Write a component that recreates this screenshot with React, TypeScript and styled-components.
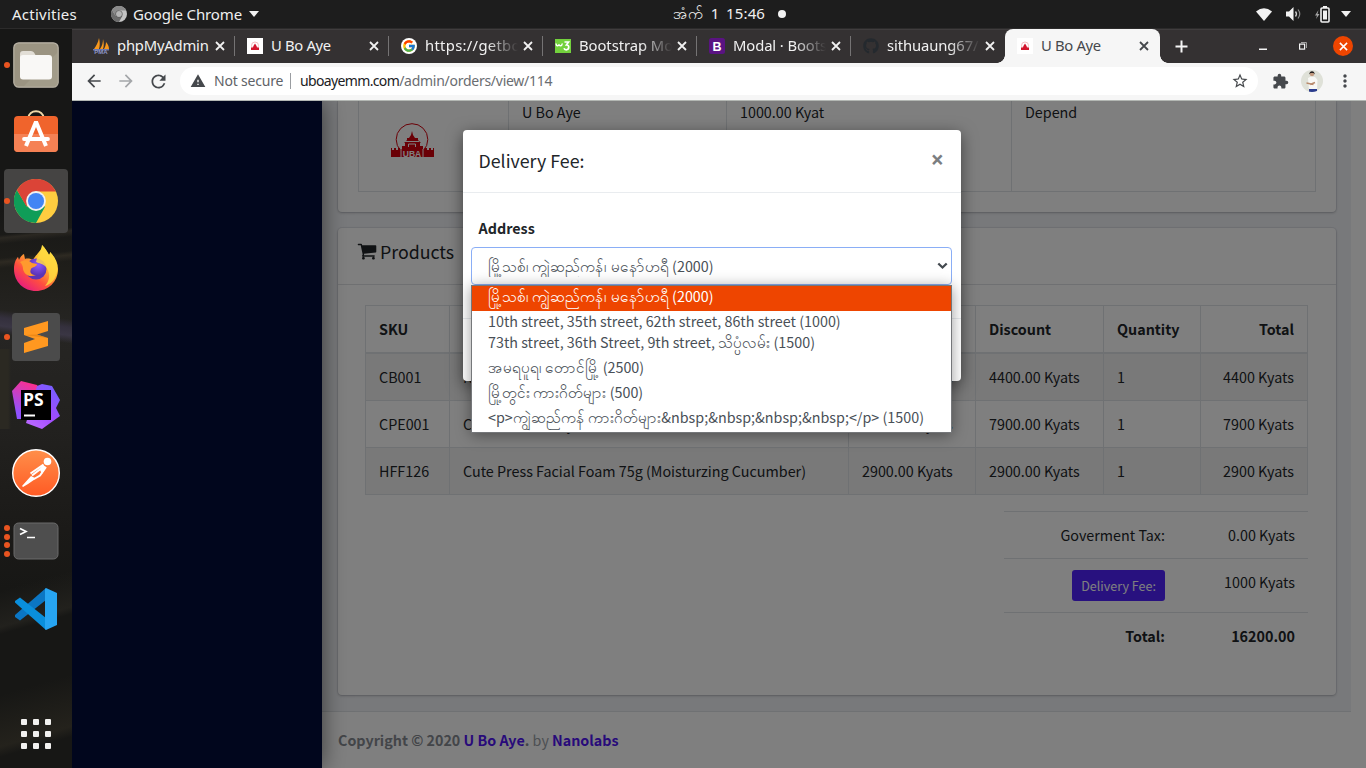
import React from "react";
import styled, { createGlobalStyle, css } from "styled-components";
import {
  MdArrowBack,
  MdArrowForward,
  MdExtension,
  MdMoreVert,
  MdRefresh,
  MdStarBorder,
  MdWarning,
} from "react-icons/md";
import { FaGithub } from "react-icons/fa";
import { FcGoogle } from "react-icons/fc";

const bodyFont = `"Noto Sans CJK JP", "Noto Sans", sans-serif`;
const shellFont = `"Noto Sans", "Open Sans", sans-serif`;

const GlobalStyle = createGlobalStyle`
  * { box-sizing: border-box; }
  body { margin: 0; overflow: hidden; background: #1d1d1d; }
  svg { display: block; flex: none; }
`;

const Desktop = styled.div`
  width: 1366px;
  height: 768px;
  display: flex;
  flex-direction: column;
  overflow: hidden;
  font-family: ${shellFont};
`;

/* ---------- system bar ---------- */

const SystemBar = styled.header`
  height: 29px;
  flex: none;
  display: flex;
  background: #1d1d1d;
  color: #f0f0f0;
  font-size: 15px;
  line-height: 28px;
  border-bottom: 1px solid #2c2b2b;
`;

const SystemLeft = styled.div`
  width: 673px;
  display: flex;
  align-items: center;
  padding-left: 12px;
`;

const ActivitiesLabel = styled.span`
  width: 99px;
  letter-spacing: 0.25px;
`;

const AppMenu = styled.span`
  display: flex;
  align-items: center;
  letter-spacing: -0.13px;
  span { margin: 0 7px 0 6px; }
`;

const Clock = styled.div`
  display: flex;
  align-items: center;
  height: 26px;
  line-height: 26px;
  white-space: pre;
`;

const ClockDay = styled.span`
  width: 53px;
`;

const ClockTime = styled.span`
  letter-spacing: 0.15px;
`;

const NoticeDot = styled.i`
  width: 8px;
  height: 8px;
  margin: 2px 0 0 13px;
  border-radius: 50%;
  background: #f2f2f2;
`;

const SystemRight = styled.div`
  display: flex;
  align-items: center;
  justify-content: flex-end;
  margin-left: auto;
  padding-right: 15px;
`;

/* ---------- dock ---------- */

const Workspace = styled.div`
  flex: 1;
  display: flex;
  min-height: 0;
`;

const Dock = styled.nav`
  width: 72px;
  flex: none;
  display: flex;
  flex-direction: column;
  padding-top: 2px;
  background:
    linear-gradient(174deg, transparent 205px, #2b2822 208px, transparent 214px, transparent 228px, #2e2a22 232px, transparent 238px),
    linear-gradient(8deg, transparent 0 255px, transparent 430px, #3a3644 438px, #34303d 446px, transparent 454px),
    linear-gradient(164deg, transparent 540px, #22211d 575px, transparent 582px, transparent 640px, #24221c 690px, transparent 700px),
    linear-gradient(90deg, #2b2922 0 8px, transparent 11px) 0 320px / 72px 80px no-repeat,
    linear-gradient(#171716 0 180px, #1f1e1a 240px, #262523 300px, #22211f 400px, #1b1a18 500px, #171715 560px);
`;

const DockSlot = styled.div`
  height: 68px;
  flex: none;
  display: flex;
  align-items: center;
  position: relative;
  padding-left: 4px;
`;

const DockTile = styled.div<{ $active?: boolean }>`
  width: 64px;
  height: 64px;
  display: flex;
  align-items: center;
  justify-content: center;
  border-radius: 4px;
  background: ${(p) => (p.$active ? "#454443" : "transparent")};
`;

const RunningDots = styled.div`
  position: absolute;
  left: 4px;
  top: 0;
  height: 68px;
  display: flex;
  flex-direction: column;
  justify-content: center;
  gap: 2.7px;
`;

const RunningDot = styled.i`
  width: 6px;
  height: 6px;
  border-radius: 50%;
  background: #e95420;
`;

const AppsGrid = styled.div`
  margin: auto 0 19px 21px;
  display: grid;
  grid-template-columns: repeat(3, 6px);
  gap: 6px;
`;

const AppsDot = styled.i`
  height: 6px;
  border-radius: 1px;
  background: #f2f1ef;
`;

/* ---------- browser chrome ---------- */

const Browser = styled.section`
  flex: 1;
  min-width: 0;
  display: flex;
  flex-direction: column;
`;

const TabStrip = styled.div`
  height: 34px;
  flex: none;
  display: flex;
  background: #343132;
  border-top: 1px solid #403d3e;
  padding-left: 9px;
`;

const TabBox = styled.div<{ $active?: boolean; $separated?: boolean }>`
  width: 154px;
  height: 34px;
  margin-top: -1px;
  flex: none;
  display: flex;
  align-items: center;
  position: relative;
  padding-left: 12px;
  color: #f1f1f1;
  ${(p) =>
    p.$separated &&
    css`
      &::after {
        content: "";
        width: 1px;
        height: 20px;
        margin-left: auto;
        background: #757374;
      }
    `}
  ${(p) =>
    p.$active &&
    css`
      width: 155px;
      color: #45484c;
      background: #f6f6f6;
      border-radius: 8px 8px 0 0;
      &::before,
      &::after {
        content: "";
        position: absolute;
        bottom: 0;
        width: 8px;
        height: 8px;
      }
      &::before {
        left: -8px;
        background: radial-gradient(circle at 0 0, transparent 7.5px, #f6f6f6 8px);
      }
      &::after {
        right: -8px;
        background: radial-gradient(circle at 100% 0, transparent 7.5px, #f6f6f6 8px);
      }
    `}
`;

const TabIcon = styled.span`
  width: 16px;
  display: flex;
`;

const TabTitle = styled.span<{ $fade?: boolean; $tracking?: number }>`
  width: 94px;
  margin-left: 8px;
  margin-right: 4px;
  overflow: hidden;
  white-space: nowrap;
  font-size: 14.8px;
  line-height: 31px;
  padding-bottom: 1px;
  letter-spacing: ${(p) => p.$tracking ?? -0.2}px;
  ${(p) => p.$fade && css`mask-image: linear-gradient(90deg, #000 62px, transparent 93px);`}
`;

const NewTab = styled.div`
  display: flex;
  align-items: center;
  padding-left: 15px;
`;

const WindowControls = styled.div`
  margin-left: auto;
  display: flex;
  align-items: center;
  padding: 0 13px 1px 0;
`;

const CloseWindow = styled.span`
  width: 20px;
  height: 20px;
  margin-left: 26px;
  display: flex;
  align-items: center;
  justify-content: center;
  border-radius: 50%;
  background: #ee4500;
`;

const Toolbar = styled.div`
  height: 38px;
  flex: none;
  display: flex;
  align-items: center;
  padding: 0 11px 1px 12px;
  background: #f6f6f6;
  border-bottom: 1px solid #b3b7b3;
  color: #45484c;
`;

const NavButtons = styled.div`
  width: 96px;
  display: flex;
  gap: 12px;
`;

const Omnibox = styled.div`
  width: 1078px;
  height: 28px;
  display: flex;
  align-items: center;
  padding: 0 9px 0 10px;
  border-radius: 14px;
  background: #fff;
  font-size: 14px;
  line-height: 26px;
`;

const NotSecure = styled.span`
  width: 76px;
  margin-left: 8px;
  color: #5f6368;
  letter-spacing: -0.2px;
`;

const OmniDivider = styled.i`
  width: 1px;
  height: 16px;
  margin-right: 9px;
  background: #9a9da1;
`;

const UrlHost = styled.span`
  color: #202124;
  letter-spacing: -0.64px;
`;

const UrlPath = styled.span`
  color: #6a6d71;
  flex: 1;
  letter-spacing: -0.27px;
`;

const ToolbarActions = styled.div`
  margin-left: auto;
  display: flex;
  align-items: center;
  gap: 12px;
`;

/* ---------- page ---------- */

const Page = styled.div`
  flex: 1;
  min-height: 0;
  display: flex;
  position: relative;
  overflow: hidden;
  background: #fff;
  color: #212529;
  font-family: ${bodyFont};
  font-size: 14.33px;
  line-height: 24px;
`;

const SideMenu = styled.aside`
  width: 250px;
  flex: none;
  position: relative;
  z-index: 1;
  background: #030d3a;
  box-shadow: 0 0 22px rgba(0, 0, 0, 0.55);
`;

const Main = styled.main`
  width: 1029px;
  display: flex;
  flex-direction: column;
`;

const Content = styled.div`
  height: 610px;
  flex: none;
  display: flex;
  flex-direction: column;
  gap: 16px;
  padding: 0 15px 0 16px;
  background: #f1f3f7;
`;

const cardShadow = css`
  background: #fff;
  border-radius: 4px;
  box-shadow: 0 0 0 1px rgba(0, 10, 60, 0.06), 0 1px 3px rgba(0, 0, 0, 0.22);
`;

const ShopCard = styled.section`
  ${cardShadow}
  height: 111px;
  padding: 0 20px 20px;
  border-top-left-radius: 0;
  border-top-right-radius: 0;
`;

const ShopRow = styled.div`
  height: 91px;
  display: grid;
  grid-template-columns: 150px 218px 285px 304px;
  border-left: 1px solid #dee2e6;
  border-bottom: 1px solid #dee2e6;
`;

const ShopCell = styled.div`
  padding: 0 13px;
  border-right: 1px solid #dee2e6;
  line-height: 22px;
`;

const LogoHolder = styled.div`
  padding: 20px 0 0 18px;
`;

const ProductsCard = styled.section`
  ${cardShadow}
  height: 467px;
`;

const CardHeader = styled.h3`
  height: 57px;
  margin: 0;
  padding: 0 19px 11px;
  display: flex;
  align-items: center;
  gap: 3px;
  border-bottom: 1px solid #dfe1e4;
  font-size: 17.75px;
  font-weight: 400;
  color: #212529;
`;

const CardBody = styled.div`
  display: flex;
  flex-direction: column;
  padding: 20px 28px 0 27px;
`;

const ProductTable = styled.div`
  border-top: 1px solid #dee2e6;
  border-left: 1px solid #dee2e6;
`;

const ProductRow = styled.div<{ $striped?: boolean; $head?: boolean }>`
  height: ${(p) => (p.$head ? 48 : 47)}px;
  display: grid;
  grid-template-columns: 84px 399px 127px 128px 97px 107px;
  background: ${(p) => (p.$striped ? "#f2f2f2" : "transparent")};
  border-bottom: ${(p) => (p.$head ? 2 : 1)}px solid #dee2e6;
  font-weight: ${(p) => (p.$head ? 700 : 400)};
`;

const ProductCell = styled.div<{ $right?: boolean }>`
  padding: 11px 13px;
  white-space: nowrap;
  overflow: hidden;
  border-right: 1px solid #dee2e6;
  text-align: ${(p) => (p.$right ? "right" : "left")};
`;

const Totals = styled.div`
  width: 304px;
  margin-top: 16px;
  align-self: flex-end;
`;

const TotalsRow = styled.div<{ $strong?: boolean }>`
  display: grid;
  grid-template-columns: 1fr 130px;
  align-items: start;
  padding: 11px 13px 11px 0;
  border-top: 1px solid #dee2e6;
  text-align: right;
  font-weight: ${(p) => (p.$strong ? 700 : 400)};
`;

const FeeButton = styled.button`
  width: 93px;
  height: 31px;
  padding: 0;
  justify-self: end;
  border: 0;
  border-radius: 3px;
  background: #5022ff;
  color: #fff;
  font: 400 12.55px/29px ${bodyFont};
`;

const Footer = styled.footer`
  flex: 1;
  padding: 16px 16px 0;
  border-top: 1px solid #dee2e6;
  background: #fff;
  color: #9aa0a6;
  font-size: 14.3px;
  white-space: pre;
  b { color: #868b92; }
  a { color: #5014f5; font-weight: 700; }
`;

/* ---------- delivery fee dialog ---------- */

const Backdrop = styled.div`
  position: absolute;
  inset: 0;
  z-index: 2;
  display: flex;
  align-items: flex-start;
  padding: 29px 0 0 391px;
  background: rgba(0, 0, 0, 0.5);
`;

const Dialog = styled.div`
  width: 498px;
  height: 251px;
  display: flex;
  flex-direction: column;
  background: #fff;
  border-radius: 4px;
  box-shadow: 0 4px 16px rgba(0, 0, 0, 0.5);
`;

const DialogHeader = styled.div`
  height: 63px;
  flex: none;
  display: flex;
  align-items: center;
  justify-content: space-between;
  padding: 0 16px 2px 15.5px;
  border-bottom: 1px solid #e9ecef;
  font-size: 17.8px;
`;

const DialogClose = styled.span`
  margin: 0 1px 3px 0;
  color: #7b7e81;
  font: 700 23px/24px "Open Sans", sans-serif;
`;

const DialogBody = styled.div`
  height: 125px;
  flex: none;
  padding: 23px 9px 0 8px;
  position: relative;
`;

const FieldLabel = styled.label`
  display: block;
  padding-left: 7.5px;
  font-weight: 700;
`;

const SelectBox = styled.div`
  height: 38px;
  margin-top: 7px;
  display: flex;
  align-items: center;
  justify-content: space-between;
  padding: 0 3px 0 16px;
  border: 1px solid #8aaef6;
  border-radius: 4px;
  color: #495057;
`;

const SelectValue = styled.span`
  height: 22px;
  overflow: hidden;
  line-height: 22px;
  white-space: nowrap;
`;

const OptionList = styled.ul`
  position: absolute;
  left: 8px;
  right: 9px;
  top: 92px;
  height: 148px;
  margin: 0;
  padding: 0;
  overflow: hidden;
  list-style: none;
  background: #fff;
  border: 1px solid #75777a;
  color: #495057;
  box-shadow: 0 2px 14px rgba(0, 0, 0, 0.4);
`;

const Option = styled.li<{ $selected?: boolean; $tall?: boolean }>`
  height: ${(p) => (p.$tall ? 25 : 21)}px;
  padding-left: 16px;
  line-height: 20px;
  white-space: pre;
  background: ${(p) => (p.$selected ? "#ee4500" : "transparent")};
  color: ${(p) => (p.$selected ? "#fff" : "inherit")};
`;

const Burmese = styled.span`
  font-size: 15.36px;
  line-height: 0;
`;

const DialogFooter = styled.div`
  flex: 1;
  border-top: 1px solid #e9ecef;
`;

/* ---------- drawings ---------- */

const Cross = ({ color = "#fff", size = 10, weight = 1.8 }) => (
  <svg width={size} height={size} viewBox="0 0 10 10" stroke={color} strokeWidth={weight}>
    <path d="M1 1l8 8M9 1l-8 8" />
  </svg>
);

const UbaLogo = () => (
  <svg width="44" height="38" viewBox="0 0 44 38">
    <circle cx="22" cy="18.5" r="15.8" fill="none" stroke="#d4000c" strokeWidth="1" />
    <path
      fill="#d4000c"
      d="M22 10l1 4 2 3h3v2l3 3h-1v3h3v3h2v-1h2v2h2v-2h2v2h2v-2h1v9H1v-9h1v2h2v-2h2v2h2v-2h2v1h2v-3h3v-3h-1l3-3v-2h2l2-3z"
    />
    <path stroke="#fff" strokeWidth="1" fill="none" d="M15 20.500h14M18.500 26v-3h7v3M11 28v8M33 28v8" />
    <text x="22" y="35.500" fill="#fff" fontSize="8.500" fontWeight="700" textAnchor="middle" fontFamily="Liberation Sans">
      UBA
    </text>
  </svg>
);

const UbaFavicon = () => (
  <svg width="16" height="16" viewBox="0 0 16 16">
    <path fill="#fff" d="M0 0h16v16H0z" />
    <circle cx="8" cy="7.500" r="3.500" fill="none" stroke="#f3b3bb" strokeWidth=".9" />
    <path fill="#d2142c" d="M8 5.500l1.600 2.500.4 1.500h2V12H4V9.500h2L6.400 8z" />
  </svg>
);

const SailFavicon = () => (
  <svg width="17" height="16" viewBox="0 0 17 16">
    <path fill="#f8981d" d="M6 0c1 4 1 8 0 11H1C3 8 5 5 6 0zM10 1c1 4 1 7 0 10H7c2-3 3-6 3-10zM13 4c2 2 3 5 3 7h-5c1-2 2-4 2-7z" />
    <path fill="#6c78af" d="M0 11h16v1.500H0z" />
    <text x="8" y="16" fontSize="6" fontWeight="700" fill="#8f97c8" textAnchor="middle" fontFamily="Liberation Sans">
      PMA
    </text>
  </svg>
);

const GoogleDisc = styled.span`
  width: 16px;
  height: 16px;
  display: flex;
  align-items: center;
  justify-content: center;
  border-radius: 50%;
  background: #fff;
`;

const GoogleFavicon = () => (
  <GoogleDisc>
    <FcGoogle size={14} />
  </GoogleDisc>
);

const W3Favicon = () => (
  <svg width="16" height="16" viewBox="0 0 16 16">
    <path fill="#73d13d" d="M0 1h16v14H0z" />
    <path fill="none" stroke="#fff" strokeWidth="1.500" d="M1 5.500c.3 3 2.500 3 3 .8.500 2.200 2.800 2.200 3.300-.8" />
    <path fill="none" stroke="#fff" strokeWidth="1.700" d="M9.500 4h4L11.500 6.800c3 0 3 5-.3 5-1.500 0-2-.8-2.200-1.500" />
  </svg>
);

const BootstrapFavicon = () => (
  <svg width="16" height="16" viewBox="0 0 16 16">
    <rect width="16" height="16" rx="2.500" fill="#5a1382" />
    <text x="8" y="12.500" fontSize="12.500" fontWeight="700" fill="#fff" textAnchor="middle" fontFamily="Liberation Sans">
      B
    </text>
  </svg>
);

const CartIcon = () => (
  <svg width="20" height="20" viewBox="0 0 1792 1792" fill="#212529">
    <path d="M704 1536q0 52-38 90t-90 38-90-38-38-90 38-90 90-38 90 38 38 90zm896 0q0 52-38 90t-90 38-90-38-38-90 38-90 90-38 90 38 38 90zm128-1088v512q0 24-16.500 42.500t-40.500 21.500l-1044 122q13 60 13 70 0 16-24 64h920q26 0 45 19t19 45-19 45-45 19h-1024q-26 0-45-19t-19-45q0-11 8-31.500t16-36 21.500-40 15.500-29.500l-177-823h-204q-26 0-45-19t-19-45 19-45 45-19h256q16 0 28.500 6.500t19.500 15.500 13 24.500 8 26 5.500 29.500 4.500 26h1201q26 0 45 19t19 45z" />
  </svg>
);

const ChromeMark = ({ size, grey }: { size: number; grey?: boolean }) => {
  const [red, yellow, green, blue] = grey
    ? ["#8a8a8a", "#c4c4c4", "#6b6b6b", "#b5b5b5"]
    : ["#db4437", "#ffcd40", "#0f9d58", "#4285f4"];
  return (
    <svg width={size} height={size} viewBox="0 0 48 48">
      <circle cx="24" cy="24" r="24" fill={yellow} />
      <path fill={green} d="M3.200 12A24 24 0 0 0 24 48l10-18H14z" />
      <path fill={red} d="M3.200 12a24 24 0 0 1 41.600 0l.8 1.500H24L13.600 30z" />
      <circle cx="24" cy="24" r="10.800" fill={grey ? "#5a5a5a" : "#f1f1f1"} />
      <circle cx="24" cy="24" r="8.800" fill={blue} />
    </svg>
  );
};

const FilesIcon = () => (
  <svg width="46" height="46" viewBox="0 0 46 46">
    <rect x=".8" y=".8" width="44.400" height="44.400" rx="5" fill="#9b9482" stroke="#b9b3a6" strokeWidth="1.200" />
    <path fill="#aaa392" d="M45 10v30q0 5-5 5H10z" opacity=".5" />
    <path fill="#e2ded6" d="M7 12q0-3 3-3h8q2 0 3 1.500L22.500 13H36v8H7z" />
    <rect x="7" y="13" width="32" height="24.500" rx="3" fill="#f9f8f6" />
  </svg>
);

const SoftwareIcon = () => (
  <svg width="46" height="50" viewBox="0 0 46 50">
    <path d="M15.500 10c0-9 15-9 15 0" fill="none" stroke="#efd9a8" strokeWidth="2" />
    <rect x="1" y="8" width="44" height="36" rx="4" fill="#f0642c" />
    <path fill="#f58154" d="M1 26h44v14q0 4-4 4H5q-4 0-4-4z" />
    <path fill="none" stroke="#fff" strokeWidth="4" d="M13 38L22.500 15h1L33 38" />
    <path stroke="#fff" strokeWidth="3.800" strokeLinecap="round" d="M11 31h24" />
  </svg>
);

const FirefoxIcon = () => (
  <svg width="46" height="50" viewBox="0 0 46 50">
    <defs>
      <linearGradient id="fxBody" x1=".85" y1=".1" x2=".2" y2="1">
        <stop offset="0" stopColor="#fff44f" />
        <stop offset=".35" stopColor="#ffb02e" />
        <stop offset=".65" stopColor="#ff4f3f" />
        <stop offset="1" stopColor="#e31587" />
      </linearGradient>
      <radialGradient id="fxGlobe" cx=".6" cy=".3">
        <stop offset="0" stopColor="#9059ff" />
        <stop offset="1" stopColor="#5b34b5" />
      </radialGradient>
    </defs>
    <path
      fill="url(#fxBody)"
      d="M29 1c3 3 5 6 7 10 1-1 1-2 1-3 5 5 8 11 8 17 0 13-10 22-22 22S1 38 1 25c0-6 2-10 4-12l1 3c1-3 3-5 5-6l1 5c3-1 6 0 8 1 3-6 9-9 9-15z"
    />
    <circle cx="23" cy="25" r="10.500" fill="url(#fxGlobe)" />
    <path fill="#ff9a2e" d="M7 18c5-3 9-2 12 1l5 1c0 3-5 3-6 5-2 4 1 6 5 6-7 3-12-1-13-6 0-3-1-5-3-7z" />
    <path fill="#ffd83f" d="M29 1c3 3 5 6 7 10 1-1 1-2 1-3 6 6 8 14 7 20-2 8-6 12-12 14 6-7 5-15 0-20-4-3-7-3-9-4 1-6 6-10 6-17z" opacity=".85" />
  </svg>
);

const SublimeIcon = () => (
  <svg width="48" height="48" viewBox="0 0 48 48">
    <rect width="48" height="48" rx="3.500" fill="#4b4b4b" />
    <path fill="#ff9820" d="M36 8v10l-11 3.600L36 25v8L12 40V30l11-4-11-4v-7z" />
    <path fill="#e07d10" d="M12 22l24 3-11-3.400z" opacity=".6" />
  </svg>
);

const PhpStormIcon = () => (
  <svg width="48" height="48" viewBox="0 0 48 48">
    <defs>
      <linearGradient id="psLeft" x1="0" y1="1" x2=".5" y2="0">
        <stop offset=".2" stopColor="#8f52ff" />
        <stop offset="1" stopColor="#ff2e8c" />
      </linearGradient>
      <linearGradient id="psRight" x1=".9" y1=".2" x2=".3" y2="1">
        <stop offset="0" stopColor="#7a5cff" />
        <stop offset=".5" stopColor="#a14cff" />
        <stop offset="1" stopColor="#b765ff" />
      </linearGradient>
    </defs>
    <path fill="url(#psLeft)" d="M0 10L9 0l16 4 10 18-14 16H5z" />
    <path fill="url(#psRight)" d="M25 5l5-2 10 2 8 14-4 8 4 8-18 13-16-6z" />
    <path fill="#000" d="M9 9h30v30H9z" />
    <path fill="#fff" d="M12 33.500h11v2H12z" />
    <text x="11" y="25" fontSize="17.500" fontWeight="700" fill="#fff" fontFamily="Open Sans">
      PS
    </text>
  </svg>
);

const PostmanIcon = () => (
  <svg width="48" height="48" viewBox="0 0 48 48">
    <defs>
      <linearGradient id="pm" x1="0" y1="0" x2="0" y2="1">
        <stop offset="0" stopColor="#ff8f4a" />
        <stop offset="1" stopColor="#ff5a24" />
      </linearGradient>
    </defs>
    <circle cx="24" cy="24" r="23.300" fill="url(#pm)" stroke="#fff" strokeWidth="1.400" />
    <circle cx="35.500" cy="12.500" r="3.800" fill="#fff" />
    <path stroke="#fff" strokeWidth="2" fill="none" d="M31.500 15.500L18.500 24.500M32.500 17L20 26.500M34 18L28 26.500l-6 3.500" />
    <path fill="#fff" d="M19 27l5 2.500L16 35l-5 3-1-1zM28 21l4-4 2 1-4 7z" />
  </svg>
);

const TerminalIcon = () => (
  <svg width="46" height="38" viewBox="0 0 46 38">
    <rect x="1" y="1" width="44" height="36" rx="4.500" fill="#4e4e4e" stroke="#6b6b6b" />
    <path fill="none" stroke="#fff" strokeWidth="1.700" d="M7 6.500l6 3-6 3M14 15.500h8" />
  </svg>
);

const VsCodeIcon = () => (
  <svg width="44" height="44" viewBox="0 0 44 44">
    <path fill="#0b76c4" d="M32 1v12L6 33.500 1 30v-2z" />
    <path fill="#0a8fdc" d="M6 10.500L32 31v12L1 15.500v-1.500z" />
    <path fill="#27a5f2" d="M32 1l11 5v32l-11 5-1-1V2z" />
  </svg>
);

const WifiIcon = () => (
  <svg width="16" height="13" viewBox="0 0 16 13" fill="#f2f2f2">
    <path d="M8 13L0 3.500Q8-3 16 3.500z" />
  </svg>
);

const SpeakerIcon = () => (
  <svg width="17" height="14" viewBox="0 0 17 14">
    <path fill="#f2f2f2" d="M1 4.500h3L8.500 0v14L4 9.500H1z" />
    <path fill="none" stroke="#d0d0d0" strokeWidth="1.300" d="M10.500 4.500q2 2.500 0 5" />
    <path fill="none" stroke="#8b8b8b" strokeWidth="1.200" d="M13 2.500q3.500 4.500 0 9" />
  </svg>
);

const BatteryIcon = () => (
  <svg width="15" height="17" viewBox="0 0 15 17">
    <path fill="#a5a5a5" d="M3.500 4L0 9.500h2L1 13l3.500-5h-2z" />
    <path fill="#f2f2f2" d="M8 0h4v2H8z" />
    <rect x="6" y="2" width="8" height="14" rx="1" fill="none" stroke="#f2f2f2" strokeWidth="1.600" />
    <path fill="#f2f2f2" d="M8 4.500h4v9H8z" />
  </svg>
);

const CaretDown = () => (
  <svg width="10" height="6" viewBox="0 0 10 6">
    <path fill="#f2f2f2" d="M0 0h10L5 6z" />
  </svg>
);

const Avatar = () => (
  <svg width="22" height="22" viewBox="0 0 22 22">
    <defs>
      <clipPath id="face">
        <circle cx="11" cy="11" r="11" />
      </clipPath>
    </defs>
    <g clipPath="url(#face)">
      <path fill="#dfe1d8" d="M0 0h22v22H0z" />
      <path fill="#f8f8f5" d="M7 8l3-1.500 4 .5 2.500 3-.5 10H8z" />
      <circle cx="11" cy="4" r="2.200" fill="#c39a7f" />
      <path fill="#24201f" d="M8.300 4.500C8 0 14 0 13.700 4.500L12.500 3H9.500z" />
      <path stroke="#b98b6d" strokeWidth="1.400" d="M5.500 13l7 1.500M14 12.500l-5 2" />
      <path fill="#2b3c8e" d="M8 19h8v3H8z" />
    </g>
  </svg>
);

const SpacedIcon = styled.span<{ $left: number }>`
  display: flex;
  margin-left: ${(p) => p.$left}px;
`;

/* ---------- data ---------- */

type TabData = { title: string; icon: React.ReactNode; fade?: boolean; tracking?: number; separated?: boolean };

const tabs: TabData[] = [
  { title: "phpMyAdmin", icon: <SailFavicon />, tracking: -0.2, separated: true },
  { title: "U Bo Aye", icon: <UbaFavicon />, tracking: -0.33, separated: true },
  { title: "https://getbootstrap", icon: <GoogleFavicon />, fade: true, tracking: 0.3, separated: true },
  { title: "Bootstrap Modal", icon: <W3Favicon />, fade: true, tracking: -0.05, separated: true },
  { title: "Modal · Bootstrap", icon: <BootstrapFavicon />, fade: true, tracking: -0.1, separated: true },
  { title: "sithuaung67/", icon: <FaGithub size={16} color="#24292e" />, fade: true, tracking: -0.1 },
];

const dockApps: { icon: React.ReactNode; running?: number; active?: boolean }[] = [
  { icon: <FilesIcon />, running: 1 },
  { icon: <SoftwareIcon /> },
  { icon: <ChromeMark size={44} />, running: 1, active: true },
  { icon: <FirefoxIcon /> },
  { icon: <SublimeIcon />, running: 1 },
  { icon: <PhpStormIcon /> },
  { icon: <PostmanIcon /> },
  { icon: <TerminalIcon />, running: 4 },
  { icon: <VsCodeIcon /> },
];

const products = [
  ["CB001", "Nivea Body Lotion", "4400.00 Kyats", "4400.00 Kyats", "1", "4400 Kyats"],
  ["CPE001", "Cute Press Evory", "7900.00 Kyats", "7900.00 Kyats", "1", "7900 Kyats"],
  ["HFF126", "Cute Press Facial Foam 75g (Moisturzing Cucumber)", "2900.00 Kyats", "2900.00 Kyats", "1", "2900 Kyats"],
];

const firstArea = "မြို့သစ်၊ ကျွဲဆည်ကန်၊ မနော်ဟရီ";

export default function App() {
  return (
    <Desktop>
      <GlobalStyle />
      <SystemBar>
        <SystemLeft>
          <ActivitiesLabel>Activities</ActivitiesLabel>
          <AppMenu>
            <ChromeMark size={16} grey />
            <span>Google Chrome</span>
            <CaretDown />
          </AppMenu>
        </SystemLeft>
        <Clock>
          <ClockDay>
            <Burmese>အံက်</Burmese>
            {"  1"}
          </ClockDay>
          <ClockTime>15:46</ClockTime>
          <NoticeDot />
        </Clock>
        <SystemRight>
          <WifiIcon />
          <SpacedIcon $left={13}><SpeakerIcon /></SpacedIcon>
          <SpacedIcon $left={13}><BatteryIcon /></SpacedIcon>
          <SpacedIcon $left={11}><CaretDown /></SpacedIcon>
        </SystemRight>
      </SystemBar>

      <Workspace>
        <Dock>
          {dockApps.map((app, i) => (
            <DockSlot key={i}>
              <DockTile $active={app.active}>{app.icon}</DockTile>
              {app.running && (
                <RunningDots>
                  {Array.from({ length: app.running }, (_, n) => (
                    <RunningDot key={n} />
                  ))}
                </RunningDots>
              )}
            </DockSlot>
          ))}
          <AppsGrid>
            {Array.from({ length: 9 }, (_, n) => (
              <AppsDot key={n} />
            ))}
          </AppsGrid>
        </Dock>

        <Browser>
          <TabStrip>
            {tabs.map((tab) => (
              <TabBox key={tab.title} $separated={tab.separated}>
                <TabIcon>{tab.icon}</TabIcon>
                <TabTitle $fade={tab.fade} $tracking={tab.tracking}>{tab.title}</TabTitle>
                <Cross color="#f1f1f1" size={10} />
              </TabBox>
            ))}
            <TabBox $active>
              <TabIcon><UbaFavicon /></TabIcon>
              <TabTitle $tracking={-0.33}>U Bo Aye</TabTitle>
              <Cross color="#45484c" size={10} />
            </TabBox>
            <NewTab>
              <svg width="13" height="13" viewBox="0 0 13 13" stroke="#f5f5f5" strokeWidth="2">
                <path d="M6.500 .5v12M.5 6.500h12" />
              </svg>
            </NewTab>
            <WindowControls>
              <svg width="8" height="10" viewBox="0 0 8 10">
                <path fill="#f5f5f5" d="M0 7.500h8V9H0z" />
              </svg>
              <SpacedIcon $left={32}>
                <svg width="8" height="8" viewBox="0 0 8 8" fill="none">
                  <path stroke="#a3a2a2" d="M2 .5h5.500V6" />
                  <rect x=".6" y="2.100" width="5" height="5" stroke="#f5f5f5" strokeWidth="1.200" />
                </svg>
              </SpacedIcon>
              <CloseWindow>
                <Cross size={9} weight={1.700} />
              </CloseWindow>
            </WindowControls>
          </TabStrip>

          <Toolbar>
            <NavButtons>
              <MdArrowBack size={20} />
              <MdArrowForward size={20} color="#a4a6a9" />
              <MdRefresh size={21} />
            </NavButtons>
            <Omnibox>
              <MdWarning size={16} />
              <NotSecure>Not secure</NotSecure>
              <OmniDivider />
              <UrlHost>uboayemm.com</UrlHost>
              <UrlPath>/admin/orders/view/114</UrlPath>
              <MdStarBorder size={18} />
            </Omnibox>
            <ToolbarActions>
              <MdExtension size={17} />
              <Avatar />
              <MdMoreVert size={20} />
            </ToolbarActions>
          </Toolbar>

          <Page>
            <SideMenu />
            <Main>
              <Content>
                <ShopCard>
                  <ShopRow>
                    <ShopCell>
                      <LogoHolder>
                        <UbaLogo />
                      </LogoHolder>
                    </ShopCell>
                    <ShopCell>U Bo Aye</ShopCell>
                    <ShopCell>1000.00 Kyat</ShopCell>
                    <ShopCell>Depend</ShopCell>
                  </ShopRow>
                </ShopCard>

                <ProductsCard>
                  <CardHeader>
                    <CartIcon />
                    Products
                  </CardHeader>
                  <CardBody>
                    <ProductTable>
                      <ProductRow $head>
                        <ProductCell>SKU</ProductCell>
                        <ProductCell>Name</ProductCell>
                        <ProductCell>Price</ProductCell>
                        <ProductCell>Discount</ProductCell>
                        <ProductCell>Quantity</ProductCell>
                        <ProductCell $right>Total</ProductCell>
                      </ProductRow>
                      {products.map((row, i) => (
                        <ProductRow key={row[0]} $striped={i % 2 === 0}>
                          {row.map((value, c) => (
                            <ProductCell key={c} $right={c === 5}>{value}</ProductCell>
                          ))}
                        </ProductRow>
                      ))}
                    </ProductTable>
                    <Totals>
                      <TotalsRow>
                        <span>Goverment Tax:</span>
                        <span>0.00 Kyats</span>
                      </TotalsRow>
                      <TotalsRow>
                        <FeeButton>Delivery Fee:</FeeButton>
                        <span>1000 Kyats</span>
                      </TotalsRow>
                      <TotalsRow $strong>
                        <span>Total:</span>
                        <span>16200.00</span>
                      </TotalsRow>
                    </Totals>
                  </CardBody>
                </ProductsCard>
              </Content>
              <Footer>
                <b>Copyright © 2020 <a>U Bo Aye</a>.</b> by <a>Nanolabs</a>
              </Footer>
            </Main>

            <Backdrop>
              <Dialog>
                <DialogHeader>
                  Delivery Fee:
                  <DialogClose>×</DialogClose>
                </DialogHeader>
                <DialogBody>
                  <FieldLabel>Address</FieldLabel>
                  <SelectBox>
                    <SelectValue>
                      <Burmese>{firstArea}</Burmese> (2000)
                    </SelectValue>
                    <svg width="11" height="8" viewBox="0 0 11 8">
                      <path fill="none" stroke="#43494f" strokeWidth="2.300" d="M1.300 1.500l4.200 4 4.200-4" />
                    </svg>
                  </SelectBox>
                  <OptionList>
                    <Option $tall $selected><Burmese>{firstArea}</Burmese> (2000)</Option>
                    <Option>10th street, 35th street, 62th street, 86th street (1000)</Option>
                    <Option $tall>73th street, 36th Street, 9th street, <Burmese>သိပ္ပံလမ်း</Burmese> (1500)</Option>
                    <Option $tall><Burmese>အမရပူရ၊ တောင်မြို့</Burmese> (2500)</Option>
                    <Option $tall><Burmese>မြို့တွင်း ကားဂိတ်များ</Burmese> (500)</Option>
                    <Option $tall>
                      {"<p>"}<Burmese>ကျွဲဆည်ကန် ကားဂိတ်များ</Burmese>{"&nbsp;&nbsp;&nbsp;&nbsp;</p> (1500)"}
                    </Option>
                  </OptionList>
                </DialogBody>
                <DialogFooter />
              </Dialog>
            </Backdrop>
          </Page>
        </Browser>
      </Workspace>
    </Desktop>
  );
}
